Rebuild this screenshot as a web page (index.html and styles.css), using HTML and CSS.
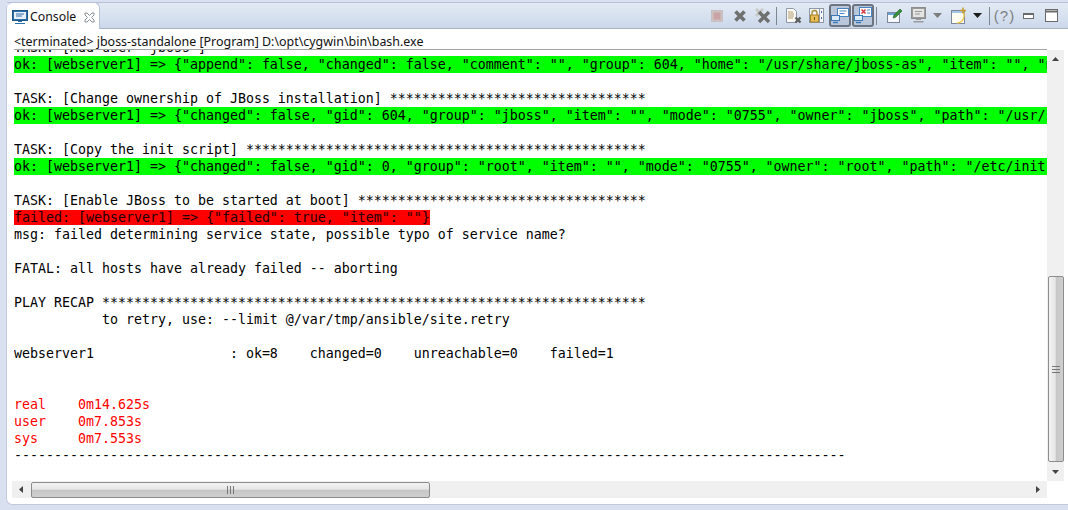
FILE: index.html
```html
<!DOCTYPE html>
<html lang="en">
<head>
<meta charset="utf-8">
<title>Console</title>
<link rel="stylesheet" href="styles.css">
</head>
<body>
<main class="view">
  <header class="tabbar">
    <div class="tab">
      <svg class="tab-icon" width="16" height="16" viewBox="0 0 16 16"><rect x="0.5" y="1.5" width="15" height="10" fill="#2f6fa8" stroke="#1f5788"/><rect x="2" y="3" width="12" height="7" fill="#e8f0f8"/><path d="M4 5h8M4 7h6" stroke="#2f6fa8"/><path d="M6 12h4v1H6zM3 14h10v1H3z" fill="#2f6fa8"/></svg>
      <span class="tab-label">Console</span>
      <svg class="tab-close" width="11" height="11" viewBox="0 0 11 11"><path d="M1 1l2 0 2.500 2.500L8 1l2 0 0 2-2.500 2.500L10 8l0 2-2 0-2.500-2.500L3 10l-2 0 0-2 2.500-2.500L1 3z" fill="#fff" stroke="#8a8f96"/></svg>
    </div>
    <div class="tools">
      <span class="tool"><svg width="12" height="12" viewBox="0 0 12 12"><rect x="0.5" y="0.500" width="11" height="11" fill="#cfc0c0" stroke="#c4c0c4"/><rect x="2.500" y="2.500" width="7" height="7" fill="#c9a3a6"/></svg></span>
      <span class="tool"><svg width="14" height="14" viewBox="0 0 14 14"><path d="M2.500 2.500l9 9M11.500 2.500l-9 9" stroke="#6f7070" stroke-width="3.600"/></svg></span>
      <span class="tool"><svg width="17" height="17" viewBox="0 0 17 17"><path d="M2 2l7 7M9 2l-7 7" stroke="#c8c8c4" stroke-width="3"/><path d="M5 5l10 10M15 5L5 15" stroke="#6f7070" stroke-width="3.400"/></svg></span>
      <span class="sep sep-a"></span>
      <span class="tool tool-gap"><svg width="18" height="18" viewBox="0 0 18 18"><path d="M1.500 1.500h7l3 3v11h-10z" fill="#fbfbf4" stroke="#8d97a8"/><path d="M3 5h5M3 7h6M3 9h6M3 11h5" stroke="#b09a70"/><path d="M10.500 10.500l5 5M15.500 10.500l-5 5" stroke="#5e6060" stroke-width="2.400"/></svg></span>
      <span class="tool"><svg width="17" height="17" viewBox="0 0 17 17"><rect x="1.500" y="1.500" width="14" height="14" fill="#f4f6fa" stroke="#8d97a8"/><path d="M11.500 1.500v14" stroke="#8d97a8"/><path d="M13 4h1v2h-1zM13 10h1v2h-1z" fill="#4a6d9c"/><path d="M4 8V6a2.500 2.500 0 0 1 5 0v2" fill="none" stroke="#a78a3a" stroke-width="1.300"/><rect x="2.500" y="8" width="8" height="7" fill="#e8bd55" stroke="#a78426"/><rect x="6" y="10" width="1" height="3" fill="#6b5416"/></svg></span>
      <span class="tool tool-on"><svg width="18" height="17" viewBox="0 0 18 17"><rect x="6.500" y="1.500" width="11" height="8" fill="#fff" stroke="#4c86c2"/><path d="M8.500 4h7M8.500 6.500h5" stroke="#4c86c2"/><rect x="0.500" y="8.500" width="8" height="5" fill="#dce9f6" stroke="#3a78b8"/><path d="M2 15.500h5" stroke="#3a78b8" stroke-width="1.400"/><path d="M3 2h1M3 4h1M5 2h1M5 5h1M11 12h1M13 11h1" stroke="#a9b4c0"/></svg></span>
      <span class="tool tool-on tool-on-b"><svg width="18" height="17" viewBox="0 0 18 17"><rect x="5.500" y="0.500" width="12" height="9" fill="#fff" stroke="#4c86c2"/><path d="M7.500 2.500l4 4M11.500 2.500l-4 4" stroke="#d8343a" stroke-width="1.500"/><path d="M13 3h3M13 6h3" stroke="#4c86c2"/><rect x="0.500" y="8.500" width="8" height="5" fill="#dce9f6" stroke="#3a78b8"/><path d="M2 15.500h5" stroke="#3a78b8" stroke-width="1.400"/><path d="M3 2h1M3 4h1M1 6h1M11 12h1M13 11h1" stroke="#a9b4c0"/></svg></span>
      <span class="sep sep-b"></span>
      <span class="tool tool-pin"><svg width="18" height="17" viewBox="0 0 18 17"><rect x="1.500" y="5.500" width="12" height="10" fill="#f6f8fb" stroke="#7d8799"/><rect x="2" y="6" width="11" height="2" fill="#6aa2da"/><path d="M8 8l6-6 2 2-6 6-3 1z" fill="#3b8f3d" stroke="#256b2a" stroke-width="0.700"/></svg></span>
      <span class="tool tool-mon"><svg width="16" height="17" viewBox="0 0 16 17"><rect x="0.500" y="0.500" width="14" height="11" fill="#9a9a9a" stroke="#8c8c8c"/><rect x="2" y="2" width="11" height="8" fill="#e4e4e2"/><path d="M4 4.500h7M4 7h5" stroke="#9a9a9a"/><path d="M5 12h5v1H5zM2.500 14h10v1.500h-10z" fill="#9a9a9a"/></svg></span>
      <span class="drop"><svg width="9" height="5" viewBox="0 0 9 5"><path d="M0 0h9L4.500 5z" fill="#7d7d7d"/></svg></span>
      <span class="tool tool-new"><svg width="18" height="18" viewBox="0 0 18 18"><rect x="1.500" y="3.500" width="13" height="13" fill="#fcfcf0" stroke="#7d8799"/><rect x="2" y="4" width="12" height="2" fill="#a5c5e6"/><path d="M14 5v4a7 7 0 0 1-7 7" fill="none" stroke="#ecc94e" stroke-width="1.300"/><path d="M13 0.500v6M10 3.500h6" stroke="#c89a2c" stroke-width="1.500"/></svg></span>
      <span class="drop"><svg width="9" height="5" viewBox="0 0 9 5"><path d="M0 0h9L4.500 5z" fill="#1c1c1c"/></svg></span>
      <span class="sep sep-c"></span>
      <span class="tool tool-help">(?)</span>
      <span class="tool"><svg width="11" height="6" viewBox="0 0 11 6"><rect x="0.500" y="0.500" width="10" height="5" fill="#fff" stroke="#6a6a6a"/><path d="M1 1.500h9" stroke="#6a6a6a"/></svg></span>
      <span class="tool"><svg width="13" height="13" viewBox="0 0 13 13"><rect x="0.500" y="0.500" width="12" height="12" fill="#fff" stroke="#6a6a6a"/><path d="M1 2.500h11" stroke="#6a6a6a" stroke-width="2"/></svg></span>
    </div>
  </header>
  <div class="status">&lt;terminated&gt; jboss-standalone [Program] D:\opt\cygwin\bin\bash.exe</div>
  <div class="console">
    <div class="console-main">
      <div class="output">
<pre class="line first">TASK: [Add user "jboss"]</pre>
<pre class="line ok">ok: [webserver1] =&gt; {"append": false, "changed": false, "comment": "", "group": 604, "home": "/usr/share/jboss-as", "item": "", "name": "jboss", "shell": "/bin/bash"}</pre>
<pre class="line"> </pre>
<pre class="line">TASK: [Change ownership of JBoss installation] ********************************</pre>
<pre class="line ok">ok: [webserver1] =&gt; {"changed": false, "gid": 604, "group": "jboss", "item": "", "mode": "0755", "owner": "jboss", "path": "/usr/share/jboss-as", "size": 4096}</pre>
<pre class="line"> </pre>
<pre class="line">TASK: [Copy the init script] **************************************************</pre>
<pre class="line ok">ok: [webserver1] =&gt; {"changed": false, "gid": 0, "group": "root", "item": "", "mode": "0755", "owner": "root", "path": "/etc/init.d/jboss", "size": 1024, "state": "file"}</pre>
<pre class="line"> </pre>
<pre class="line">TASK: [Enable JBoss to be started at boot] ************************************</pre>
<pre class="line"><span class="failed">failed: [webserver1] =&gt; {"failed": true, "item": ""}</span></pre>
<pre class="line">msg: failed determining service state, possible typo of service name?</pre>
<pre class="line"> </pre>
<pre class="line">FATAL: all hosts have already failed -- aborting</pre>
<pre class="line"> </pre>
<pre class="line">PLAY RECAP ********************************************************************</pre>
<pre class="line">           to retry, use: --limit @/var/tmp/ansible/site.retry</pre>
<pre class="line"> </pre>
<pre class="line">webserver1                 : ok=8    changed=0    unreachable=0    failed=1</pre>
<pre class="line"> </pre>
<pre class="line"> </pre>
<pre class="line err">real    0m14.625s</pre>
<pre class="line err">user    0m7.853s</pre>
<pre class="line err">sys     0m7.553s</pre>
<pre class="line">--------------------------------------------------------------------------------------------------------</pre>
      </div>
      <div class="hbar">
        <span class="arrow"><svg width="5" height="7" viewBox="0 0 5 7"><path d="M4 0v7L0 3.500z" fill="#444"/></svg></span>
        <span class="hthumb"><svg width="9" height="8" viewBox="0 0 9 8"><path d="M1.500 0v8M4.500 0v8M7.500 0v8" stroke="#777"/></svg></span>
        <span class="hrest"></span>
        <span class="arrow arrow-end"><svg width="5" height="7" viewBox="0 0 5 7"><path d="M1 0v7l4-3.500z" fill="#444"/></svg></span>
      </div>
    </div>
    <div class="vbar">
      <span class="varrow"><svg width="7" height="5" viewBox="0 0 7 5"><path d="M0 4h7L3.500 0z" fill="#444"/></svg></span>
      <span class="vrest"></span>
      <span class="vthumb"><svg width="8" height="9" viewBox="0 0 8 9"><path d="M0 1.500h8M0 4.500h8M0 7.500h8" stroke="#777"/></svg></span>
      <span class="varrow"><svg width="7" height="5" viewBox="0 0 7 5"><path d="M0 1h7L3.500 5z" fill="#444"/></svg></span>
    </div>
  </div>
</main>
</body>
</html>
```
FILE: styles.css
```css
html, body {
  margin: 0;
  height: 510px;
  overflow: hidden;
  background: #d9e1f1;
}
.view {
  box-sizing: border-box;
  height: 502px;
  margin: 3px 0 0 6px;
  background: #fff;
  border-left: 1px solid #c3cadb;
  border-bottom: 1px solid #c3cadb;
  border-radius: 6px 0 0 6px;
  display: flex;
  flex-direction: column;
}
.tabbar {
  height: 27px;
  flex: none;
  box-sizing: border-box;
  display: flex;
  justify-content: space-between;
  background: linear-gradient(#e3eaf5, #cbd8ea);
  border-top: 1px solid #b7c2d8;
  border-bottom: 1px solid #a9b3c4;
  margin-top: -1px;
}
.tab {
  width: 93px;
  height: 27px;
  margin-top: -1px;
  box-sizing: border-box;
  background: #fff;
  border: 1px solid #b7c2d8;
  border-left: 0;
  border-bottom: 0;
  border-radius: 6px 6px 0 0;
  display: flex;
  align-items: center;
  padding: 2px 0 0 5px;
}
.tab-icon { flex: none; }
.tab-label {
  font: 12.3px/16px "Noto Sans", sans-serif;
  color: #111;
  margin-left: 2px;
  width: 54px;
}
.tab-close { flex: none; }
.tools {
  display: flex;
  align-items: center;
  padding-right: 5px;
}
.tool {
  width: 23px;
  height: 23px;
  flex: none;
  display: flex;
  align-items: center;
  justify-content: center;
  box-sizing: border-box;
}
.tool-gap { margin-left: 5px; }
.tool-pin { margin-left: 6px; }
.tool-on {
  width: 22px;
  margin-left: 1px;
  background: #b9c7da;
  border: 2px solid #6b7480;
  border-radius: 3px;
}
.tool-on-b { margin-left: 1px; }
.tool-mon { margin-left: 1px; }
.tool-new { margin-left: 3px; }
.tool-help {
  font: 15px/23px "Liberation Sans", sans-serif;
  letter-spacing: 1px;
  color: #7e8185;
  margin-left: 3px;
  margin-right: 1px;
}
.drop {
  width: 14px;
  flex: none;
  display: flex;
  justify-content: center;
}
.sep {
  width: 1px;
  height: 18px;
  flex: none;
  background: #7c8590;
}
.sep-a { margin-left: 2px; }
.sep-b { margin-left: 2px; }
.sep-c { margin-left: 5px; }
.status {
  height: 20px;
  flex: none;
  box-sizing: border-box;
  margin-left: 7px;
  padding-top: 5px;
  font: 12.45px/16px "Noto Sans", sans-serif;
  color: #111;
  white-space: nowrap;
}
.console {
  flex: 1;
  min-height: 0;
  display: flex;
  padding-right: 4px;
}
.console-main {
  flex: 1;
  min-width: 0;
  display: flex;
  flex-direction: column;
}
.output {
  flex: 1;
  min-height: 0;
  overflow: hidden;
  margin-left: 7px;
  border-top: 1px solid #a4a4a4;
}
.line {
  margin: 0;
  height: 17px;
  font: 13.29px/17px "DejaVu Sans Mono", monospace;
  color: #000;
  white-space: pre;
}
.first { margin-top: -11px; }
.ok { background: #0f0; }
.failed { background: #f00; color: #200; }
.err { color: #f00; }
.hbar {
  height: 17px;
  flex: none;
  margin: 0 0 6px 5px;
  background: #f0f0f0;
  display: flex;
  align-items: center;
}
.arrow {
  width: 20px;
  flex: none;
  display: flex;
  justify-content: center;
  margin-left: -1px;
}
.arrow-end { margin-left: 0; }
.hthumb {
  width: 399px;
  height: 16px;
  flex: none;
  box-sizing: border-box;
  border: 1px solid #8c8c8c;
  border-radius: 2px;
  background: linear-gradient(#f2f2f2, #e6e6e6 45%, #c6c6c6 50%, #cfcfcf);
  display: flex;
  align-items: center;
  justify-content: center;
}
.hrest { flex: 1; }
.vbar {
  width: 17px;
  flex: none;
  margin-bottom: 23px;
  border-top: 1px solid #fff;
  background: #f0f0f0;
  display: flex;
  flex-direction: column;
  align-items: center;
}
.varrow {
  height: 19px;
  flex: none;
  display: flex;
  align-items: center;
}
.vrest { flex: 1; }
.vthumb {
  width: 16px;
  height: 186px;
  flex: none;
  box-sizing: border-box;
  border: 1px solid #8c8c8c;
  border-radius: 2px;
  background: linear-gradient(90deg, #f2f2f2, #e6e6e6 45%, #c6c6c6 50%, #cfcfcf);
  display: flex;
  align-items: center;
  justify-content: center;
}
```
